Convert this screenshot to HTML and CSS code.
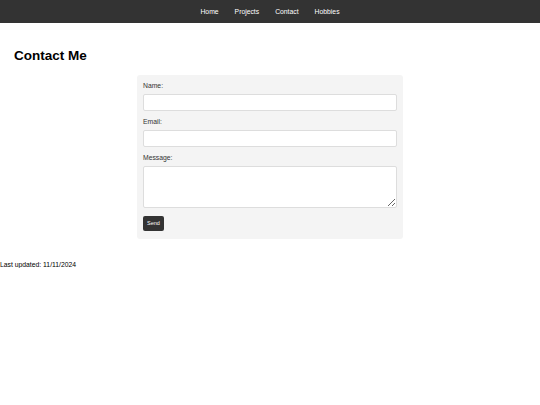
FILE: index.html
```html
<!DOCTYPE html>
<html lang="en">
<head>
<meta charset="utf-8">
<title>Contact Me</title>
<link rel="stylesheet" href="styles.css">
</head>
<body>
<header class="topbar">
  <nav class="nav">
    <a href="#" class="nav-link">Home</a>
    <a href="#" class="nav-link">Projects</a>
    <a href="#" class="nav-link">Contact</a>
    <a href="#" class="nav-link">Hobbies</a>
  </nav>
</header>
<main class="content">
  <h2 class="title">Contact Me</h2>
  <form class="contact-form">
    <label class="field-label" for="name">Name:</label>
    <input class="field-input" type="text" id="name">
    <label class="field-label" for="email">Email:</label>
    <input class="field-input" type="email" id="email">
    <label class="field-label" for="message">Message:</label>
    <textarea class="field-area" id="message"></textarea>
    <button class="send-btn" type="button">Send</button>
  </form>
</main>
<footer class="footer">Last updated: 11/11/2024</footer>
</body>
</html>
```

FILE: styles.css
```css
* { box-sizing: border-box; }

body {
  margin: 0;
  font-family: "Liberation Sans", Arial, sans-serif;
  color: #000;
  background: #fff;
}

.topbar {
  height: 23px;
  background: #333;
}

.nav {
  height: 100%;
  display: flex;
  justify-content: center;
  align-items: center;
  gap: 16px;
}

.nav-link {
  color: #fff;
  text-decoration: none;
  font-size: 6.8px;
}

.content {
  padding: 0;
}

.title {
  margin: 24.5px 0 12px 14px;
  font-size: 13.5px;
  font-weight: bold;
}

.contact-form {
  width: 266px;
  margin: 0 auto;
  padding: 6px 6px 8px;
  background: #f4f4f4;
  border-radius: 3px;
}

.field-label {
  display: block;
  font-size: 6.8px;
  line-height: 10px;
  color: #333;
  margin-bottom: 3px;
}

.field-input,
.field-area {
  display: block;
  width: 100%;
  margin: 0 0 6px;
  border: 1px solid #ddd;
  border-radius: 2px;
  background: #fff;
  padding: 2px 4px;
  font-family: inherit;
  font-size: 6.8px;
}

.field-input { height: 17px; }

.field-area {
  height: 42px;
  margin-top: 1px;
  margin-bottom: 8px;
}

.send-btn {
  display: block;
  width: 21px;
  height: 15px;
  padding: 0;
  border: none;
  border-radius: 2px;
  background: #333;
  color: #fff;
  font-family: inherit;
  font-size: 5.5px;
}

.footer {
  margin-top: 22.5px;
  font-size: 6.8px;
}
```
